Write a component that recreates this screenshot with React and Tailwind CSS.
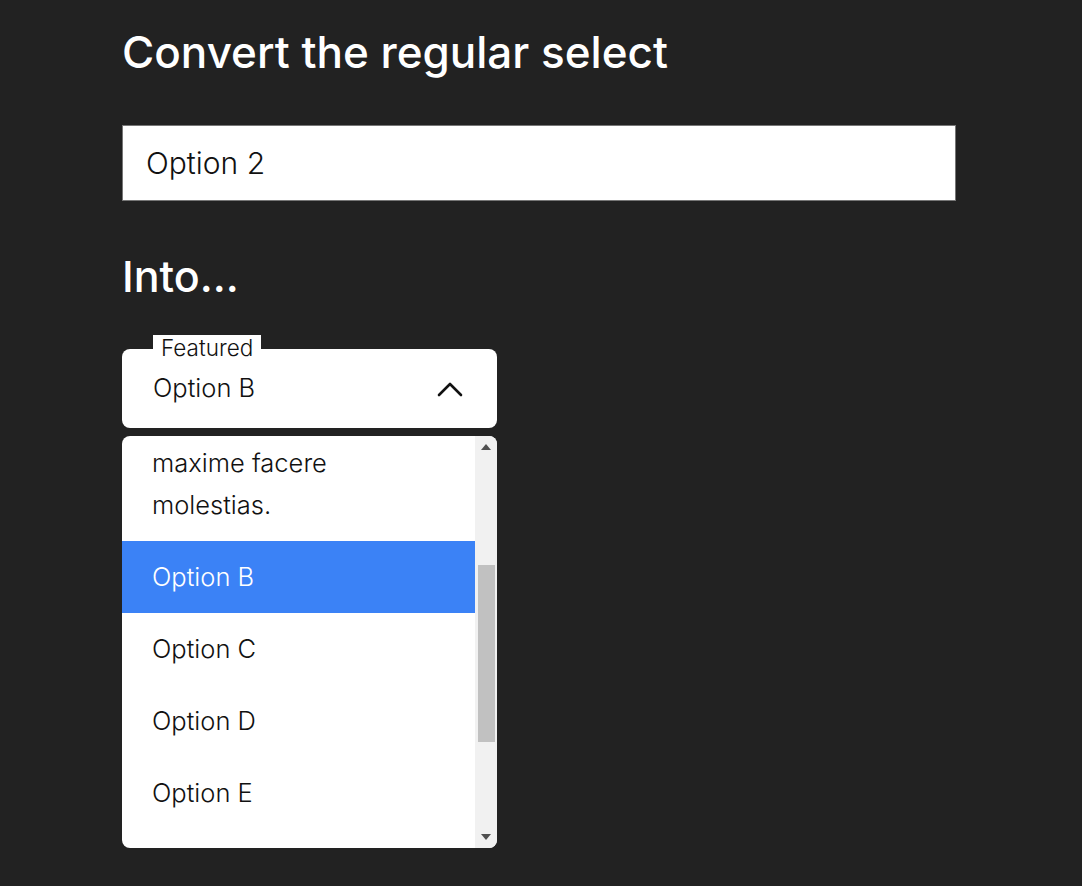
import React from "react";

function ChevronUp() {
  return (
    <svg width="26" height="16" viewBox="0 0 26 16" fill="none">
      <path d="M2 14 L13 3 L24 14" stroke="#111" strokeWidth="2.6" strokeLinecap="round" strokeLinejoin="round" />
    </svg>
  );
}

function Option({ label, active }) {
  return (
    <div
      className={
        "px-[30px] py-[15px] text-[25.5px] leading-[42px] font-light " +
        (active ? "bg-[#3b82f6] text-white" : "text-[#111]")
      }
    >
      {label}
    </div>
  );
}

export default function App() {
  return (
    <div
      className="min-h-[886px] bg-[#222222] pl-[122px] pt-[22px]"
      style={{ fontFamily: "Inter, 'Noto Sans', sans-serif" }}
    >
      <h1 className="text-[44px] leading-[60px] font-medium text-white">Convert the regular select</h1>
      <div className="mt-[43px] w-[834px] h-[76px] bg-white border border-[#767676] flex items-center pl-[23px] text-[30px] font-light text-[#111]">
        Option 2
      </div>
      <h2 className="mt-[45px] text-[43px] leading-[60px] font-medium text-white">Into...</h2>

      <div className="mt-[43px] w-[375px] relative">
        <div className="absolute left-[31px] top-[-14px] bg-white px-[8px] h-[26px] text-[22.5px] leading-[26px] font-light text-[#111]">
          Featured
        </div>
        <div className="h-[79px] bg-white rounded-[8px] flex items-center justify-between pl-[31px] pr-[34px]">
          <span className="text-[25.5px] font-light text-[#111]">Option B</span>
          <ChevronUp />
        </div>
      </div>

      <div className="mt-[8px] w-[375px] h-[412px] bg-white rounded-[8px] overflow-hidden flex">
        <div className="flex-1 overflow-hidden">
          <div className="px-[30px] pt-[6px] pb-[15px] text-[25.5px] leading-[42px] font-light text-[#111]">
            maxime facere
            <br />
            molestias.
          </div>
          <Option label="Option B" active />
          <Option label="Option C" />
          <Option label="Option D" />
          <Option label="Option E" />
        </div>
        <div className="w-[22px] bg-[#f1f1f1] flex flex-col items-center">
          <div className="h-[22px] flex items-center justify-center">
            <svg width="10" height="6" viewBox="0 0 10 6"><path d="M5 0 L10 6 L0 6 Z" fill="#505050" /></svg>
          </div>
          <div className="mt-[107px] w-[17px] h-[177px] bg-[#c1c1c1]" />
          <div className="flex-1" />
          <div className="h-[22px] flex items-center justify-center">
            <svg width="10" height="6" viewBox="0 0 10 6"><path d="M0 0 L10 0 L5 6 Z" fill="#505050" /></svg>
          </div>
        </div>
      </div>
    </div>
  );
}
